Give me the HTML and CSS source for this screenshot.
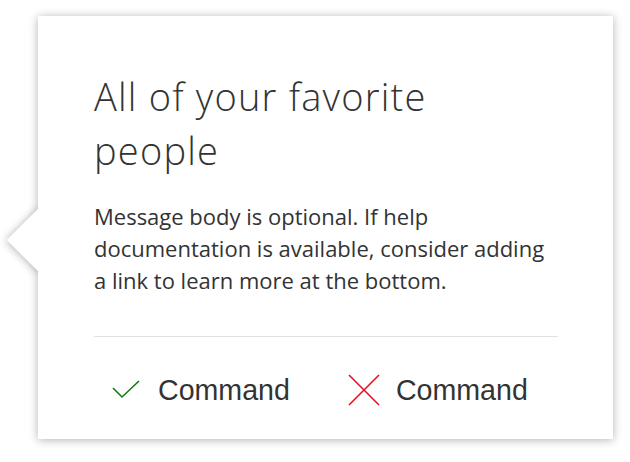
FILE: index.html
```html
<!DOCTYPE html>
<html lang="en">
<head>
<meta charset="utf-8">
<title>Teaching callout</title>
<link rel="stylesheet" href="styles.css">
</head>
<body>
<div class="callout">
  <div class="content">
    <h1 class="title">All of your favorite people</h1>
    <p class="message">Message body is optional. If help documentation is available, consider adding a link to learn more at the bottom.</p>
  </div>
  <div class="divider"></div>
  <div class="actions">
    <button class="cmd">
      <svg class="icon" viewBox="0 0 32 32" width="32" height="32"><path d="M3 14 L12 23 L29 7" fill="none" stroke="#107c10" stroke-width="1.6"/></svg>
      <span class="label">Command</span>
    </button>
    <button class="cmd">
      <svg class="icon" viewBox="0 0 32 32" width="32" height="32"><path d="M1 1 L31 31 M31 1 L1 31" fill="none" stroke="#e81123" stroke-width="1.6"/></svg>
      <span class="label">Command</span>
    </button>
  </div>
</div>
</body>
</html>
```
FILE: styles.css
```css
html {
  background: #ffffff;
}
body {
  margin: 0;
  padding: 16px 0 23px 38px;
  font-family: "Open Sans", "Noto Sans", sans-serif;
  color: #333333;
}
.callout {
  position: relative;
  width: 575px;
  height: 423px;
  box-sizing: border-box;
  background: #ffffff;
  box-shadow: 0 1px 9px rgba(0, 0, 0, 0.3);
  display: flex;
  flex-direction: column;
}
.callout::before,
.callout::after {
  content: "";
  position: absolute;
  left: -22px;
  top: 202px;
  width: 44px;
  height: 44px;
  background: #ffffff;
  transform: rotate(45deg);
}
.callout::before {
  z-index: -1;
  box-shadow: 0 1px 9px rgba(0, 0, 0, 0.3);
}
.callout::after {
  z-index: 1;
}
.content {
  padding: 53px 55px 0 56px;
}
.title {
  margin: 0;
  max-width: 380px;
  font-size: 38px;
  font-weight: 300;
  letter-spacing: 1.2px;
  line-height: 54px;
  color: #333333;
}
.message {
  margin: 23px 0 0;
  font-size: 22px;
  font-weight: 400;
  line-height: 32px;
  color: #333333;
}
.divider {
  margin: 40px 55px 0 56px;
  height: 1px;
  background: #e1e1e1;
}
.actions {
  display: flex;
  gap: 26px;
  padding: 29px 56px 0;
}
.cmd {
  display: flex;
  align-items: center;
  gap: 16px;
  height: 48px;
  padding: 0 16px;
  border: 0;
  background: transparent;
  font-family: "Liberation Sans", Arial, sans-serif;
  font-size: 28.6px;
  line-height: 48px;
  color: #333333;
}
.icon {
  display: block;
  flex: none;
}
```
